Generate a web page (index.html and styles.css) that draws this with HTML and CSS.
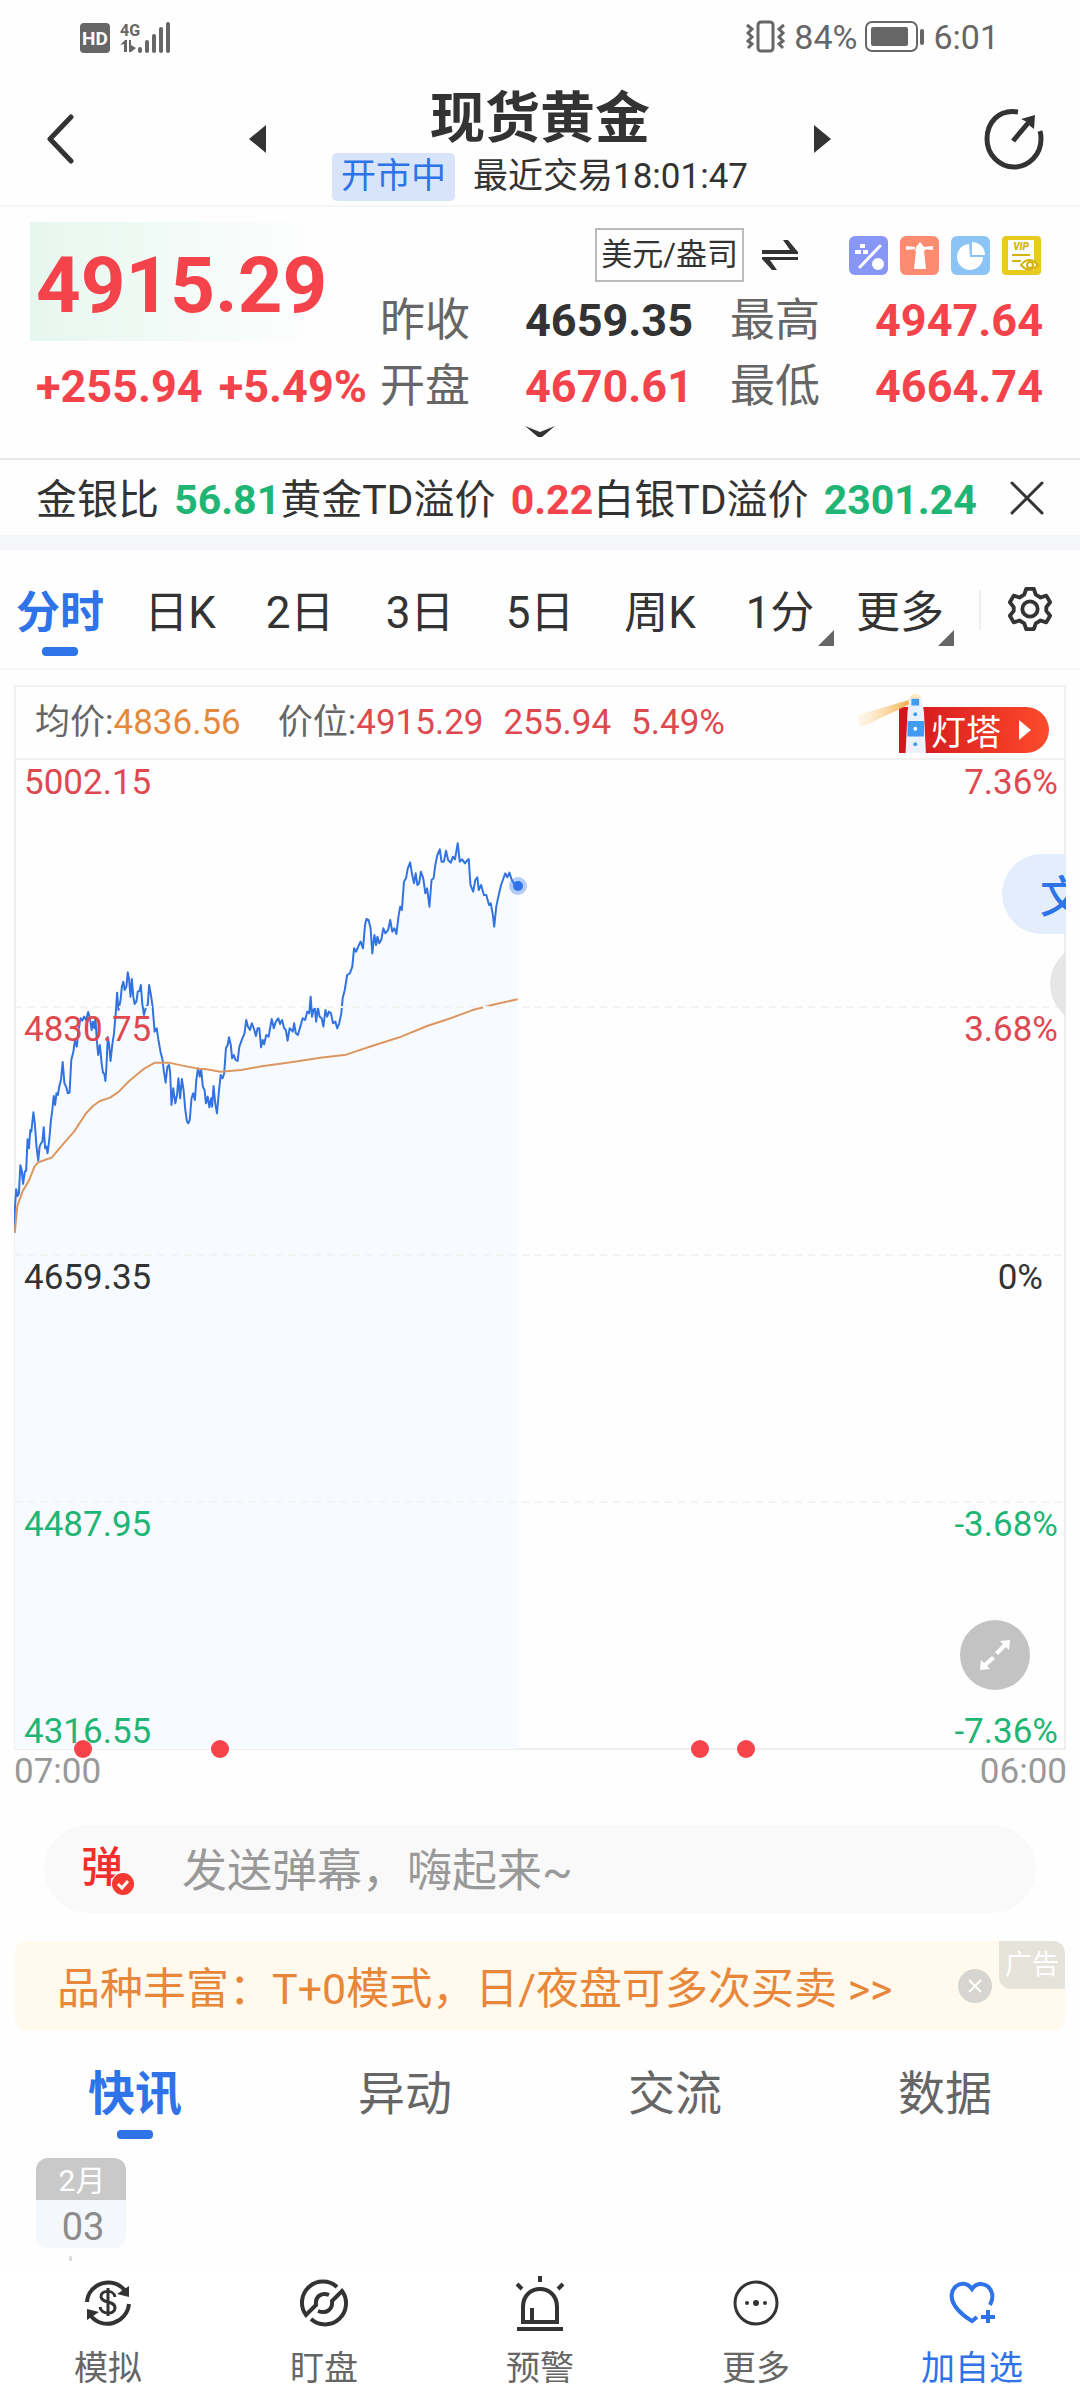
FILE: index.html
```html
<!DOCTYPE html>
<html lang="zh-CN">
<head>
    <meta charset="UTF-8">
    <meta name="viewport" content="width=device-width, initial-scale=1.0">
    <title>现货黄金</title>
    <link rel="stylesheet" href="styles.css">
</head>
<body>

    <!-- Status bar -->
    <div class="status">
        <div class="status-side">
            <svg width="66" height="36" viewBox="0 0 66 36" fill="#666">
                <rect x="0" y="4" width="30" height="30" rx="4"/>
                <text x="15" y="26" text-anchor="middle" font-size="19" font-weight="700" fill="#fff">HD</text>
                <text x="40" y="17" font-size="16" font-weight="700">4G</text>
                <path d="M40 26l5-5h2v12h-3v-8zM49 21h2v5l5 3-5 4h-2z"/>
            </svg>
            <svg class="signal" width="34" height="36" viewBox="0 0 34 36" fill="#666">
                <rect x="0" y="28" width="4" height="6" rx="2"/>
                <rect x="7" y="21" width="4" height="13" rx="2"/>
                <rect x="14" y="15" width="4" height="19" rx="2"/>
                <rect x="21" y="8" width="4" height="26" rx="2"/>
                <rect x="28" y="3" width="4" height="31" rx="2"/>
            </svg>
        </div>
        <div class="status-side">
            <svg width="40" height="34" viewBox="0 0 40 34" fill="none" stroke="#666" stroke-width="3">
                <rect x="12" y="2" width="15" height="29" rx="3"/>
                <path d="M1 5l5 4-4 4 4 4-4 4 4 3-4 4M38 5l-5 4 4 4-4 4 4 4-4 3 4 4"/>
            </svg>
            <span>84%</span>
            <svg width="60" height="34" viewBox="0 0 60 34" fill="#666">
                <rect x="1" y="2" width="51" height="29" rx="6" fill="none" stroke="#666" stroke-width="2"/>
                <rect x="6" y="7" width="37" height="19" rx="2"/>
                <rect x="55" y="9" width="4" height="16" rx="2"/>
            </svg>
            <span>6:01</span>
        </div>
    </div>

    <header class="header">
        <button class="header-btn" aria-label="返回">
            <svg width="28" height="50" viewBox="0 0 28 50" fill="none" stroke="#333" stroke-width="5" stroke-linecap="round" stroke-linejoin="round"><path d="M25 3L4 25l21 22"/></svg>
        </button>
        <div class="header-main">
            <button aria-label="上一个"><svg width="17" height="28" viewBox="0 0 17 28" fill="#333"><path d="M17 0v28L0 14z"/></svg></button>
            <div class="header-title">
                <h1>现货黄金</h1>
                <p><span class="market-state">开市中</span>最近交易18:01:47</p>
            </div>
            <button aria-label="下一个"><svg width="17" height="28" viewBox="0 0 17 28" fill="#333"><path d="M0 0v28l17-14z"/></svg></button>
        </div>
        <button class="header-btn share" aria-label="分享">
            <svg width="60" height="62" viewBox="0 0 60 62" fill="none" stroke="#333" stroke-width="5">
                <path d="M34 4C14 1 3 15 3 31a27 28 0 0 0 54 0c0-3 0-5-1-8"/>
                <path d="M29 33l16-19"/>
                <path d="M51 7l-1 14-4-3-3-4-6-3z" fill="#333" stroke="none"/>
            </svg>
        </button>
    </header>

    <section class="quote">
        <div class="quote-main">
            <div class="quote-last">
                <div class="price">4915.29</div>
                <div class="change"><span>+255.94</span><span>+5.49%</span></div>
            </div>
            <div class="quote-detail">
                <div class="tools">
                    <button class="unit">美元/盎司</button>
                    <button class="swap" aria-label="切换单位">
                        <svg width="36" height="32" viewBox="0 0 36 32" fill="#333"><path d="M0 11h28L21 1h5l10 12v2H0zM36 18v3H8l7 10h-5L0 20v-2z"/></svg>
                    </button>
                    <div class="tool-icons">
                        <svg width="39" height="39" viewBox="0 0 39 39">
                            <rect width="39" height="39" rx="6" fill="#8796f7"/>
                            <path d="M11 31L31 10" stroke="#fff" stroke-width="3" stroke-linecap="round"/>
                            <path d="M11 8h5v4h-5zM6 14h6v4H6zM14 14h5v4h-5z" fill="#fff"/>
                            <circle cx="29" cy="28" r="6" fill="#fff"/>
                        </svg>
                        <svg width="39" height="39" viewBox="0 0 39 39">
                            <rect width="39" height="39" rx="6" fill="#fc8b70"/>
                            <path d="M20 6l4 5v2l2 1-2 1 2 18H14l2-18-2-1 2-1v-2zM6 10l9 1v2l-9 1zM33 10l-9 1v2l9 1z" fill="#fff"/>
                        </svg>
                        <svg width="39" height="39" viewBox="0 0 39 39">
                            <rect width="39" height="39" rx="6" fill="#8cc5f5"/>
                            <path d="M18 8a13 13 0 1 0 14 13H19z" fill="#fff"/>
                            <path d="M21 6a13 13 0 0 1 13 13H21z" fill="#fff"/>
                        </svg>
                        <svg width="39" height="39" viewBox="0 0 39 39">
                            <rect width="39" height="39" rx="4" fill="#e8cb1c"/>
                            <path d="M6 4h26v30H6z" fill="#fff"/>
                            <text x="19" y="14" text-anchor="middle" font-size="10" font-weight="900" font-style="italic" fill="#d4b40c">VIP</text>
                            <path d="M10 19h18M10 25h9" stroke="#d4b40c" stroke-width="2"/>
                            <path d="M19 29q8-10 17 0-9 9-17 0z" fill="#fff" stroke="#d4b40c" stroke-width="2"/>
                            <circle cx="28" cy="29" r="3" fill="none" stroke="#d4b40c" stroke-width="2"/>
                        </svg>
                    </div>
                </div>
                <dl class="figures">
                    <div><dt>昨收</dt><dd>4659.35</dd></div>
                    <div><dt>最高</dt><dd class="up">4947.64</dd></div>
                    <div><dt>开盘</dt><dd class="up">4670.61</dd></div>
                    <div><dt>最低</dt><dd class="up">4664.74</dd></div>
                </dl>
            </div>
        </div>
        <button class="expand-quote" aria-label="展开">
            <svg width="30" height="12" viewBox="0 0 30 12" fill="#333"><path d="M0 0l15 6L30 0 17 11h-4z"/></svg>
        </button>
    </section>

    <section class="ticker">
        <p>金银比 <b class="down">56.81</b>黄金TD溢价 <b class="up">0.22</b>白银TD溢价 <b class="down">2301.24</b></p>
        <button aria-label="关闭">
            <svg width="34" height="34" viewBox="0 0 34 34" stroke="#333" stroke-width="3" stroke-linecap="round"><path d="M2 2l30 30M32 2L2 32"/></svg>
        </button>
    </section>

    <nav class="periods">
        <button class="active">分时</button>
        <button>日K</button>
        <button>2日</button>
        <button>3日</button>
        <button>5日</button>
        <button>周K</button>
        <button class="more">1分</button>
        <button class="more">更多</button>
        <button class="settings" aria-label="设置">
            <svg width="46" height="46" viewBox="0 0 48 48" fill="none" stroke="#333" stroke-width="4" stroke-linejoin="round">
                <path d="M20 3h8l2 6 5 3 6-2 4 7-4 5v4l4 5-4 7-6-2-5 3-2 6h-8l-2-6-5-3-6 2-4-7 4-5v-4l-4-5 4-7 6 2 5-3z"/>
                <circle cx="24" cy="24" r="8"/>
            </svg>
        </button>
    </nav>

    <section class="chart">
        <div class="chart-info">
            <p>均价:<span class="avg">4836.56</span></p>
            <p>价位:<span class="up">4915.29</span></p>
            <p class="up">255.94</p>
            <p class="up">5.49%</p>
            <button class="beacon">
                <svg width="76" height="60" viewBox="0 0 76 62">
                    <defs>
                        <linearGradient id="beam"><stop offset="0" stop-color="#ffedd0" stop-opacity=".4"/><stop offset="1" stop-color="#f3b04c"/></linearGradient>
                    </defs>
                    <path d="M1 23L55 7v5L4 36z" fill="url(#beam)"/>
                    <circle cx="61" cy="8" r="7" fill="#ffe9bd"/>
                    <path d="M55 6h13l2 14 2 42H51l2-42z" fill="#e9f1fb"/>
                    <path d="M57 6h8v7h-8zM53 29h17v16H53z" fill="#3f9cf0"/>
                    <circle cx="61" cy="22" r="2" fill="#3f9cf0"/>
                    <circle cx="61" cy="37" r="2" fill="#fff"/>
                    <circle cx="61" cy="53" r="2" fill="#3f9cf0"/>
                </svg>
                <span>灯塔<svg width="12" height="20" viewBox="0 0 12 20" fill="#fff"><path d="M0 0v20l12-10z"/></svg></span>
            </button>
        </div>
        <div class="chart-body">
            <svg class="plot" viewBox="0 0 1052 1032">
                <path class="frame" d="M1 0v989h1050V0"/>
                <g transform="translate(-14 40) scale(.3444 .3333)">
                    <path class="area" d="M43 2847V1230L47 1168 59 1096 67 1152 80 1018 97 937 111 1082 127 982 138 1060 156 888 182 786 202 878 213 755 234 655 256 636 277 655 306 843 313 711 321 783 340 578 371 517 391 612 409 555 418 645 433 555 449 695 472 780 498 915 518 835 547 970 575 805 608 922 620 858 630 940 665 712 690 783 715 660 758 742 789 657 835 722 902 590 939 680 979 685 1008 525 1028 445 1064 357 1081 460 1133 360 1151 402 1191 187 1247 320 1277 148 1329 130 1361 177 1374 275 1386 232 1435 380 1479 218 1503 258V2847z"/>
                    <polyline class="price-line" points="43,1298 43,1230 47,1168 51,1188 55,1180 59,1096 63,1110 67,1152 72,1115 76,1112 80,1018 84,1045 88,990 91,995 97,937 101,970 106,1040 111,1082 115,1040 119,1030 123,1025 127,982 131,1045 135,1040 138,1060 143,1020 148,960 152,930 156,888 160,915 164,880 168,885 172,860 177,840 182,786 187,850 192,860 197,880 202,878 207,780 213,755 218,720 223,740 228,690 234,655 239,662 244,650 250,660 256,636 261,655 266,690 270,665 274,685 277,655 281,720 285,765 290,735 295,790 299,818 303,822 306,843 309,800 313,711 317,735 321,783 326,735 331,700 336,640 340,578 344,630 350,600 354,560 358,545 362,570 367,560 371,517 375,540 379,590 383,537 387,590 391,612 396,605 400,575 405,573 409,555 413,610 418,645 424,620 429,615 433,555 439,590 443,620 449,695 455,685 460,720 466,755 472,780 476,815 481,848 486,800 491,795 494,820 498,915 503,865 509,910 514,885 518,835 523,895 528,837 533,870 538,930 543,965 547,970 551,960 556,895 561,880 566,900 570,840 575,805 580,830 584,808 589,860 594,870 598,910 603,890 608,922 613,895 616,920 620,858 625,910 630,940 636,870 641,825 646,835 651,820 656,745 661,735 665,712 670,735 674,775 679,765 684,780 690,783 695,740 702,720 710,700 715,660 720,680 726,690 731,670 737,685 743,708 748,685 753,685 758,742 763,720 767,733 773,705 780,710 785,680 789,657 795,685 801,665 808,655 813,672 819,660 825,685 830,690 835,722 841,685 846,690 850,695 854,670 859,700 865,705 872,680 879,655 886,660 892,635 898,640 902,590 906,650 910,630 914,625 918,665 923,622 928,650 934,655 939,680 945,630 950,650 955,635 961,640 967,670 974,665 979,685 985,670 991,640 995,595 1001,570 1008,525 1016,520 1023,500 1028,445 1034,455 1040,440 1047,425 1054,445 1060,375 1064,357 1070,360 1076,385 1081,460 1087,405 1092,435 1096,410 1101,430 1107,420 1113,385 1119,400 1127,390 1133,360 1139,395 1145,385 1151,402 1157,350 1162,320 1167,330 1173,245 1179,235 1184,205 1191,187 1196,220 1202,250 1207,220 1212,255 1217,250 1222,215 1229,235 1235,280 1240,265 1247,320 1253,240 1259,235 1264,195 1270,165 1277,148 1282,185 1289,185 1295,152 1301,180 1309,188 1315,170 1321,178 1329,130 1335,185 1342,178 1350,190 1356,182 1361,177 1366,255 1374,275 1380,240 1386,232 1390,270 1397,255 1405,285 1412,285 1420,315 1425,310 1431,345 1435,380 1441,320 1447,290 1455,255 1467,220 1473,232 1479,218 1486,240 1492,250 1503,258"/>
                    <polyline class="avg-line" points="43,1298 50,1220 65,1175 85,1140 100,1100 110,1088 130,1080 150,1073 185,1030 215,995 250,940 270,918 290,903 320,893 345,875 375,843 420,805 450,788 490,788 530,797 575,806 600,808 640,815 700,810 760,799 850,786 930,773 1005,764 1080,738 1160,712 1240,678 1300,658 1370,631 1440,612 1503,598"/>
                </g>
                <path class="grid" d="M1 247h1050M1 495h1050M1 742h1050"/>
                <circle cx="504" cy="126" r="9" fill="#2f73e8" fill-opacity=".35"/>
                <circle cx="504" cy="126" r="5" fill="#2f73e8"/>
                <g class="axis">
                    <text class="up" x="10" y="34">5002.15</text>
                    <text class="up" x="10" y="281">4830.75</text>
                    <text x="10" y="529">4659.35</text>
                    <text class="down" x="10" y="776">4487.95</text>
                    <text class="down" x="10" y="983">4316.55</text>
                </g>
                <g class="axis" text-anchor="end">
                    <text class="up" x="1044" y="34">7.36%</text>
                    <text class="up" x="1044" y="281">3.68%</text>
                    <text x="1029" y="529">0%</text>
                    <text class="down" x="1044" y="776">-3.68%</text>
                    <text class="down" x="1044" y="983">-7.36%</text>
                </g>
                <g fill="#f8434a">
                    <circle cx="69" cy="989" r="9"/>
                    <circle cx="206" cy="989" r="9"/>
                    <circle cx="686" cy="989" r="9"/>
                    <circle cx="732" cy="989" r="9"/>
                </g>
                <text class="time" x="0" y="1023">07:00</text>
                <text class="time" x="1053" y="1023" text-anchor="end">06:00</text>
            </svg>
            <button class="side-text">文</button>
            <button class="side-dot" aria-label="收起"></button>
            <button class="fullscreen" aria-label="全屏">
                <svg width="34" height="34" viewBox="0 0 34 34" fill="#fff"><path d="M32 2l-1 10-3-3-8 8-3-3 8-8-3-3zM2 32l1-10 3 3 8-7 3 3-8 7 3 3z"/></svg>
            </button>
        </div>
    </section>

    <label class="danmu">
        <span class="danmu-icon">弹<svg width="24" height="24" viewBox="0 0 24 24"><circle cx="12" cy="12" r="12" fill="#f9f9f9"/><circle cx="12" cy="12" r="11" fill="#f23a30"/><path d="M7 12l4 4 6-7" fill="none" stroke="#fff" stroke-width="3"/></svg></span>
        <input type="text" placeholder="发送弹幕，嗨起来~">
    </label>

    <div class="ad">
        <a href="#">品种丰富：T+0模式，日/夜盘可多次买卖 &gt;&gt;</a>
        <button aria-label="关闭广告">
            <svg width="36" height="36" viewBox="0 0 36 36"><circle cx="18" cy="18" r="17" fill="#d6d5d0"/><path d="M12 12l12 12M24 12L12 24" stroke="#fff" stroke-width="2"/></svg>
        </button>
        <span class="ad-mark">广告</span>
    </div>

    <nav class="news-tabs">
        <button class="active">快讯</button>
        <button>异动</button>
        <button>交流</button>
        <button>数据</button>
    </nav>

    <section class="feed">
        <div class="date">
            <span class="month">2月</span>
            <span class="day">03</span>
        </div>
    </section>

    <nav class="bottom-nav">
        <a href="#">
            <svg viewBox="0 0 56 56" fill="none" stroke="#333" stroke-width="4">
                <path d="M7 27C8 8 34 0 45 16M49 29C47 48 23 56 11 41"/>
                <path d="M49 11v11l-12-3zM7 45V34l12 3z" fill="#333" stroke="none"/>
                <path d="M35 22c-1-8-15-7-14 0 1 7 14 3 14 11 0 7-14 7-15-1M28 13v28" stroke-width="3"/>
            </svg>
            模拟
        </a>
        <a href="#">
            <svg viewBox="0 0 56 56" fill="none" stroke="#333" stroke-width="4">
                <path d="M41 12A21 21 0 0 0 10 40L20 30C19 21 26 17 33 20M15 44A21 21 0 0 0 46 16L36 26C37 35 30 39 22 36"/>
            </svg>
            盯盘
        </a>
        <a href="#">
            <svg viewBox="0 0 56 56" fill="none" stroke="#333" stroke-width="4">
                <path d="M11 47V32c0-24 34-24 34 0v15zM5 54h46M20 47V33M28 1v6M5 9l5 5M51 9l-5 5"/>
            </svg>
            预警
        </a>
        <a href="#">
            <svg viewBox="0 0 56 56" fill="none" stroke="#333" stroke-width="4">
                <circle cx="28" cy="28" r="21" stroke-width="3"/>
                <g fill="#333" stroke="none"><circle cx="19" cy="28" r="2"/><circle cx="28" cy="28" r="3"/><circle cx="37" cy="28" r="2"/></g>
            </svg>
            更多
        </a>
        <a href="#" class="primary">
            <svg viewBox="0 0 56 56" fill="none" stroke="#2f73e8" stroke-width="4">
                <path d="M46 30c9-17-10-28-18-16C19 1 0 14 11 31c5 7 10 11 17 15l5-4M37 42h14M44 35v13"/>
            </svg>
            加自选
        </a>
    </nav>

</body>
</html>
```
FILE: styles.css
```css
* { margin: 0; padding: 0; box-sizing: border-box }
body {
    display: flex; flex-direction: column; min-height: 100vh; background: #fefefe; color: #333;
    font-family: Roboto, "Noto Sans CJK SC", sans-serif; overflow-x: hidden;
}
button { border: none; background: none; color: inherit; font: inherit; cursor: pointer }
a { color: inherit; text-decoration: none }
svg { display: block; flex: none }
.up { color: #f4434a; fill: #de484f }
.down { color: #1fb574; fill: #1fb574 }

/* Status bar */
.status { display: flex; justify-content: space-between; height: 70px; padding: 4px 81px 0 80px; font-size: 34px; color: #666 }
.status-side { display: flex; align-items: center; gap: 8px }
.signal { margin-left: -16px }

/* Header */
.header { display: flex; justify-content: space-between; height: 137px; padding: 2px 12px 0; border-bottom: 2px solid #f6f6f6 }
.header-btn { display: flex; align-items: center; justify-content: center; width: 96px }
.share { justify-content: flex-start; padding-left: 12px }
.header-main { display: flex; align-items: center; gap: 66px }
.header-title { padding-top: 12px; text-align: center }
.header-title h1 { font-size: 55px; line-height: 60px; font-weight: 700 }
.header-title p { display: flex; gap: 18px; font-size: 35px; line-height: 48px; margin-top: 5px }
.market-state { padding: 0 9px; border-radius: 5px; background: #d8e4f9; color: #2f73e8 }

/* Quote */
.quote { border-bottom: 2px solid #e9e9e9 }
.quote-main { display: flex; padding: 15px 37px 0 30px }
.quote-last { flex: 0 0 350px; font-weight: 700; color: #f4434a; white-space: nowrap }
.price {
    width: 290px; height: 119px; padding: 6px 0 0 6px; font-size: 78px; line-height: 115px;
    background: linear-gradient(90deg, #e6f7ef, #fefefe);
}
.change { display: flex; gap: 16px; margin-top: 24px; padding-left: 6px; font-size: 45px; line-height: 44px }
.quote-detail { flex: 1; padding-top: 6px }
.tools { display: flex; align-items: center; justify-content: flex-end; height: 54px; margin-bottom: 6px }
.unit { height: 54px; padding: 0 4px; border: 2px solid #bbb; font-size: 31px; line-height: 50px }
.swap { margin: 0 51px 0 18px }
.tool-icons { display: flex; gap: 12px; padding-right: 2px }
.figures { display: grid; grid-template-columns: 1fr 1fr; column-gap: 37px; font-size: 45px; line-height: 66px }
.figures div { display: flex; justify-content: space-between }
.figures dt { color: #666 }
.figures dd { font-weight: 700 }
.expand-quote { display: flex; justify-content: center; width: 100%; height: 38px; padding-top: 6px }

/* Ticker */
.ticker { display: flex; align-items: center; justify-content: space-between; height: 90px; padding: 0 36px; border-bottom: 15px solid #f5f6fa; font-size: 41px; white-space: nowrap }
.ticker p { padding-bottom: 4px }
.ticker b { margin-left: 5px }

/* Periods */
.periods { display: flex; height: 120px; border-bottom: 2px solid #f6f6f6; font-size: 44px }
.periods button { position: relative; flex: 1 1 0; white-space: nowrap }
.periods .settings { display: flex; align-items: center; justify-content: center }
.periods .settings svg { margin-left: 20px }
.periods .settings::before { content: ""; position: absolute; left: 19px; top: 40px; width: 2px; height: 40px; background: #eee }
.periods .more::after { content: ""; position: absolute; right: 6px; bottom: 22px; border: 8px solid; border-color: transparent #666 #666 transparent }
.active { position: relative; font-weight: 700; color: #2f73e8 }
.active::after { content: ""; position: absolute; left: calc(50% - 18px); bottom: 12px; width: 36px; height: 9px; border-radius: 4px; background: #2f73e8 }

/* Chart */
.chart { margin: 15px 14px 0 }
.chart-info { display: flex; align-items: center; gap: 20px; height: 75px; padding: 0 15px 0 19px; border: 2px solid #f1f1f1; font-size: 35px; color: #666; white-space: nowrap }
.chart-info p { line-height: 40px }
.chart-info p:first-child { margin-right: 17px }
.chart-info .up { color: #de484f }
.chart-info .avg { color: #e58a3c }
.beacon { display: flex; align-items: flex-end; margin-left: auto; height: 60px; color: #fff }
.beacon > svg { position: relative; margin-right: -32px }
.beacon span { display: flex; align-items: center; gap: 18px; height: 46px; padding: 0 18px 0 32px; border-radius: 0 23px 23px 0; background: linear-gradient(90deg, #d0151c, #fd4b2c) }
.chart-body { position: relative; overflow: hidden }
.plot { width: 100%; height: auto; font-size: 35px }
.frame { fill: none; stroke: #eee; stroke-width: 2 }
.grid { fill: none; stroke: #f3f3f3; stroke-width: 2; stroke-dasharray: 7 6 }
.area { fill: #f7fbff }
.price-line, .avg-line { fill: none; stroke-width: 2; stroke-linejoin: round; vector-effect: non-scaling-stroke }
.price-line { stroke: #3273e0 }
.avg-line { stroke: #dc965f }
.time { fill: #999 }
.axis { fill: #333 }
.side-text { position: absolute; top: 94px; right: 0; width: 64px; height: 80px; padding-left: 38px; border-radius: 40px 0 0 40px; background: #e3edfb; color: #2f73e8; font-size: 44px; font-weight: 500; text-align: left; overflow: hidden }
.side-dot { position: absolute; top: 184px; right: -64px; width: 80px; height: 80px; border-radius: 50%; background: #e6e6e6 }
.fullscreen { position: absolute; right: 36px; bottom: 102px; display: flex; align-items: center; justify-content: center; width: 70px; height: 70px; border-radius: 50%; background: #c3c3c3 }

/* Comment box */
.danmu { display: flex; align-items: center; height: 88px; margin: 33px 44px 0; padding: 0 37px; border-radius: 44px; background: #f9f9f9 }
.danmu-icon { position: relative; width: 101px; padding-bottom: 2px; font-size: 42px; line-height: 48px; font-weight: 500; color: #f22e2c }
.danmu-icon svg { position: absolute; left: 30px; bottom: -2px }
.danmu input { flex: 1; padding-top: 4px; border: none; outline: none; background: none; font: inherit; font-size: 45px }
.danmu input::placeholder { color: #999; opacity: 1 }

/* Ad */
.ad { position: relative; display: flex; align-items: center; justify-content: space-between; height: 90px; margin: 28px 15px 0; padding: 0 72px 0 42px; border-radius: 12px; background: #fffaed; font-size: 43px; color: #e8873a; white-space: nowrap }
.ad a { padding-bottom: 2px }
.ad-mark { position: absolute; top: 0; right: 0; width: 66px; border-radius: 0 12px 0 12px; background: #e5e3da; color: #fff; font-size: 27px; line-height: 48px; text-align: center }

/* News */
.news-tabs { display: flex; height: 127px; font-size: 47px; color: #666 }
.news-tabs button { flex: 1; padding-bottom: 11px }
.news-tabs .active { color: #2f73e8 }
.news-tabs .active::after { bottom: 19px }
.feed { padding: 0 36px }
.date { display: flex; flex-direction: column; width: 90px; border-radius: 12px; overflow: hidden; text-align: center; background: #f4f7fc }
.month { padding: 4px 0 0 2px; background: #c9c9c9; color: #fff; font-size: 30px; line-height: 38px }
.day { padding: 6px 0 0 4px; color: #8c8c8c; font-size: 38px; line-height: 42px }
.feed::after { content: ""; display: block; width: 3px; height: 5px; margin: 8px 0 0 33px; background: #ddd }

/* Bottom navigation */
.bottom-nav { display: flex; height: 134px; margin-top: auto; background: #fff }
.bottom-nav a { display: flex; flex-direction: column; align-items: center; flex: 1; padding-top: 9px; font-size: 34px; line-height: 40px; color: #666 }
.bottom-nav svg { width: 56px; height: 56px; margin-bottom: 17px }
.bottom-nav .primary { color: #2f73e8 }
```
